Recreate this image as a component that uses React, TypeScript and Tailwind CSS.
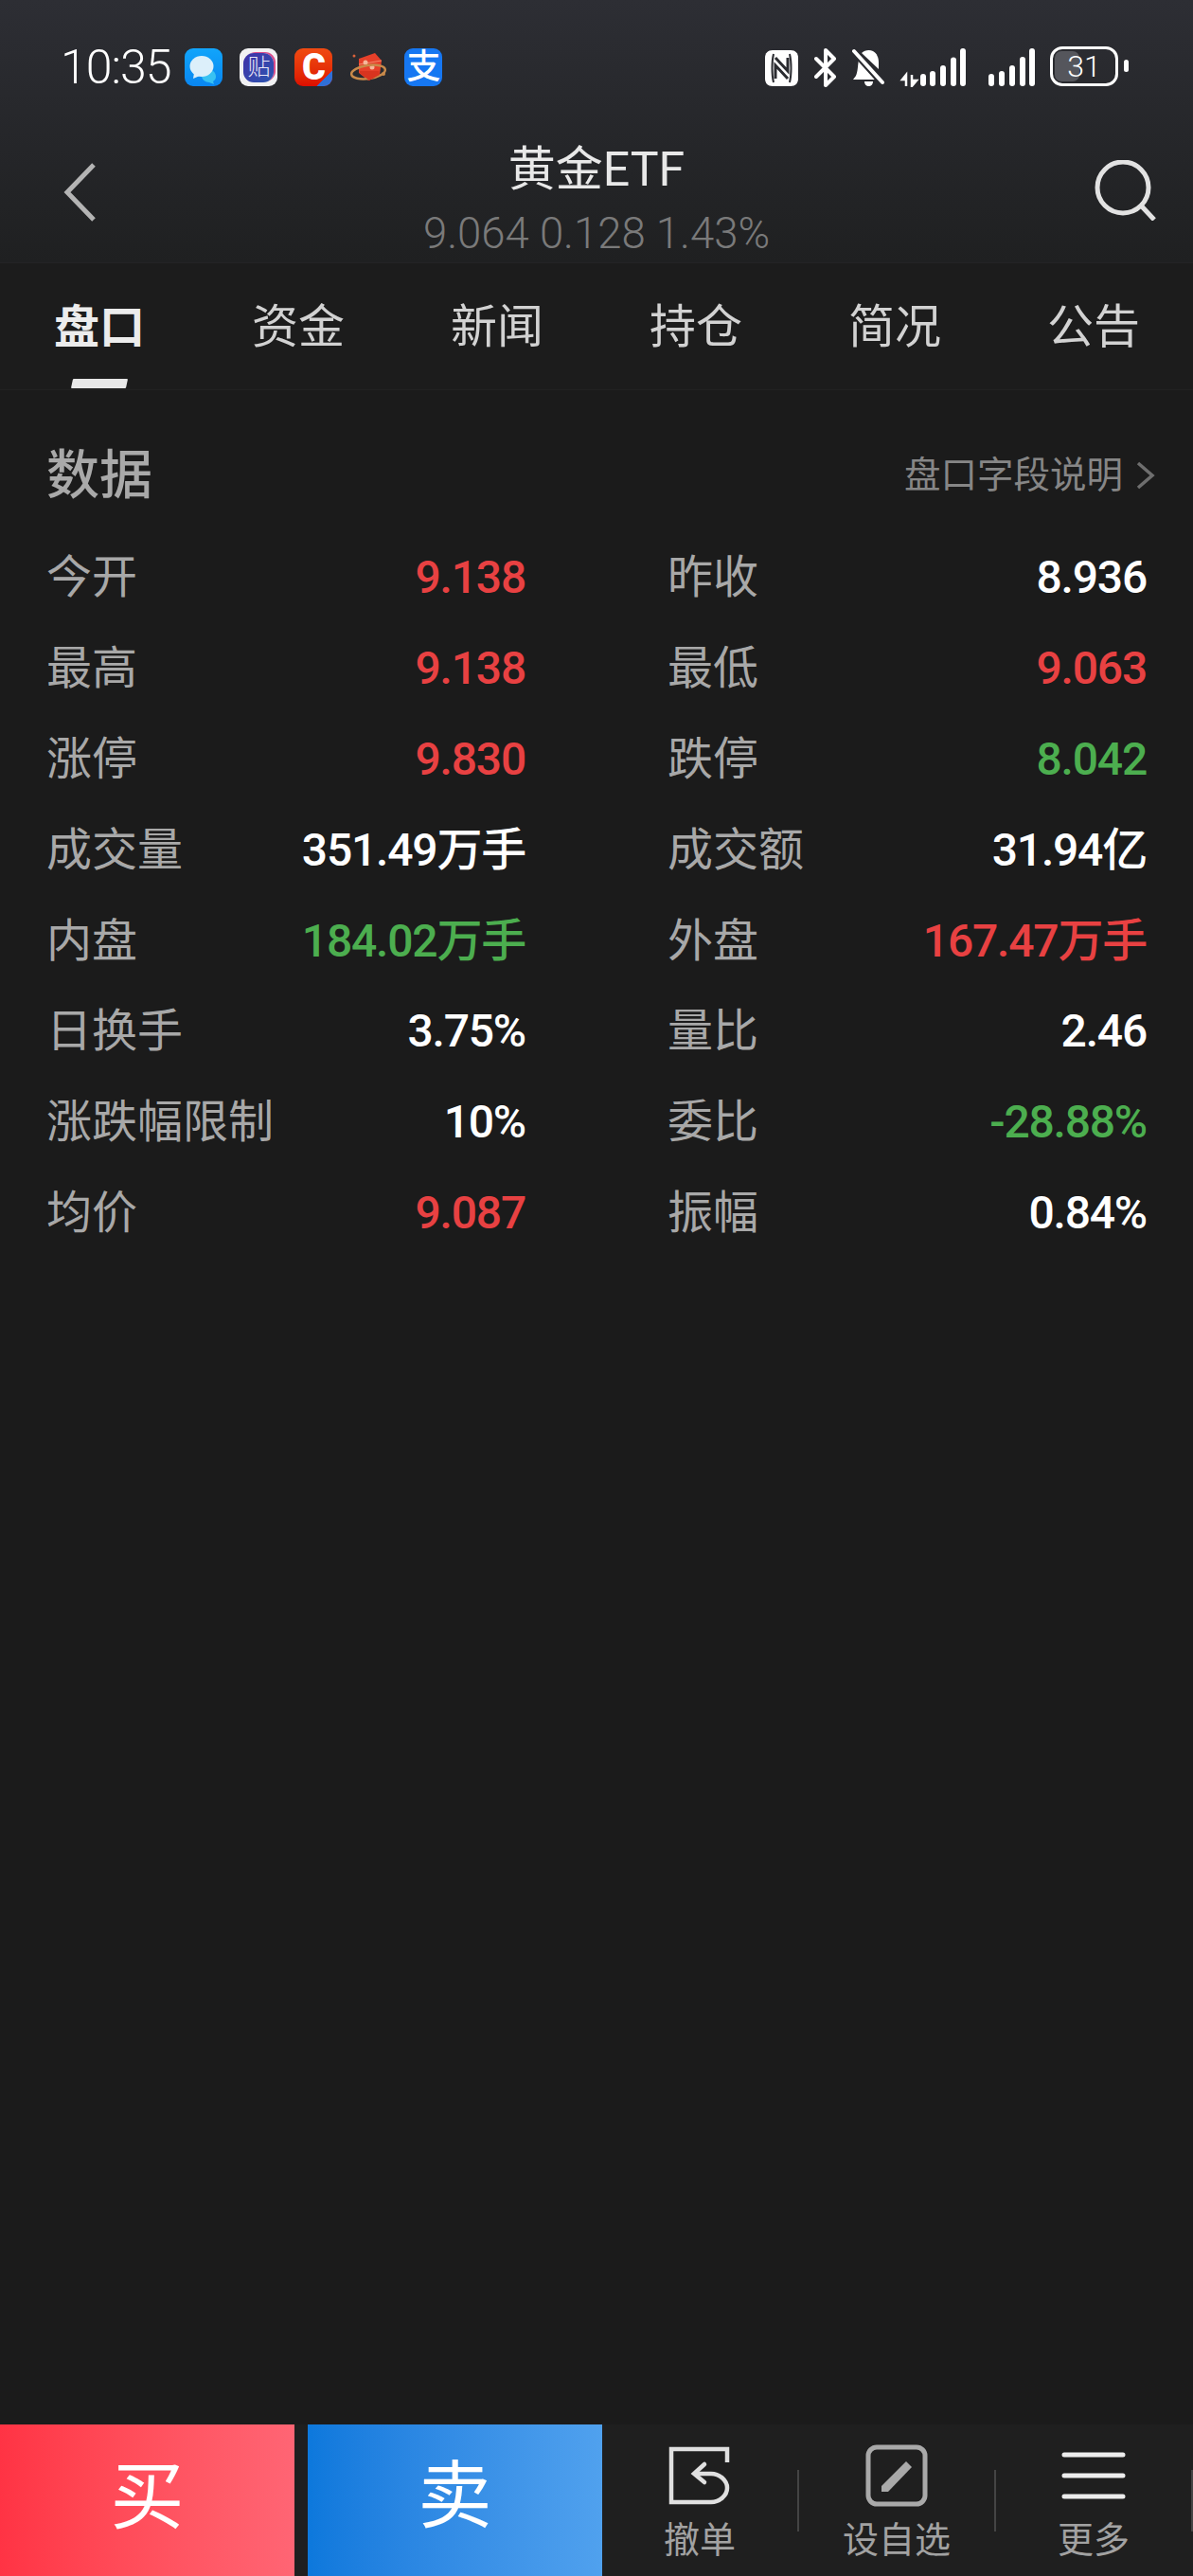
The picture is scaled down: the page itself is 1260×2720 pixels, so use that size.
const tabs = ["盘口", "资金", "新闻", "持仓", "简况", "公告"];

const RED = "text-[#e84142]";
const GREEN = "text-[#4cae4f]";
const WHITE = "text-white";

const rows = [
  ["今开", "9.138", RED, "昨收", "8.936", WHITE],
  ["最高", "9.138", RED, "最低", "9.063", RED],
  ["涨停", "9.830", RED, "跌停", "8.042", GREEN],
  ["成交量", "351.49万手", WHITE, "成交额", "31.94亿", WHITE],
  ["内盘", "184.02万手", GREEN, "外盘", "167.47万手", RED],
  ["日换手", "3.75%", WHITE, "量比", "2.46", WHITE],
  ["涨跌幅限制", "10%", WHITE, "委比", "-28.88%", GREEN],
  ["均价", "9.087", RED, "振幅", "0.84%", WHITE],
];

function AppIcons() {
  return (
    <div className="ml-[15px] flex gap-[18px]">
      <div className="flex h-[40px] w-[40px] items-center justify-center rounded-[9px] bg-gradient-to-b from-[#12a5fb] to-[#0a86f0]">
        <svg width="40" height="40" viewBox="0 0 40 40">
          <path d="M24 22c5 0 9 3 9 8 0 3-2 4-3 5l1 3-5-2c-4 0-8-3-8-7s3-7 6-7z" fill="#38c2f2" />
          <ellipse cx="18" cy="19" rx="12.5" ry="11" fill="#dceffa" />
          <path d="M10 26l-1 6 7-3z" fill="#dceffa" />
        </svg>
      </div>
      <div className="flex h-[40px] w-[40px] items-center justify-center rounded-[9px] bg-[#f1f1f3]">
        <div className="flex h-[31px] w-[32px] items-center justify-center rounded-[11px] bg-gradient-to-br from-[#3f2fa8] to-[#2a55b0] text-[24px] font-light leading-none text-[#e8e6f6] shadow-[2px_-1px_0_#d84a8a]">
          贴
        </div>
      </div>
      <div className="relative flex h-[40px] w-[40px] items-center justify-center rounded-[9px] bg-gradient-to-b from-[#f04a12] to-[#dc0c00] text-[38px] font-black leading-none text-white">
        C
        <div className="absolute bottom-0 right-0 h-[16px] w-[16px] rounded-br-[9px] bg-[linear-gradient(135deg,transparent_50%,#2f6fd6_50%)]" />
      </div>
      <svg width="40" height="40" viewBox="0 0 40 40">
        <path d="M10 11L27 5l7 8-2 15-12 6-10-8z" fill="#e6402a" />
        <path d="M10 17l24-4" stroke="#f38a6a" strokeWidth="1" />
        <circle cx="17" cy="15" r="2.500" fill="#f6b79a" />
        <circle cx="24" cy="20" r="2.500" fill="#f6b79a" />
        <ellipse cx="20" cy="25" rx="18" ry="7" fill="none" stroke="#c98a4a" strokeWidth="2.500" transform="rotate(-8 20 25)" />
        <path d="M11 26l10 8 11-6-1-4-20 0z" fill="#d8341f" />
        <circle cx="5" cy="8" r="1.500" fill="#d9623a" />
        <circle cx="36" cy="27" r="2" fill="#c98a4a" />
      </svg>
      <div className="flex h-[40px] w-[40px] items-center justify-center rounded-[9px] bg-[#1677f2] text-[36px] font-medium leading-none text-white">
        支
      </div>
    </div>
  );
}

function Bars({ width, tops, xs }: { width: number; tops: number[]; xs: number[] }) {
  return (
    <svg width={width} height="41" viewBox={`0 0 ${width} 41`}>
      {xs.map((x, i) => (
        <rect key={x} x={x} y={tops[i]} width="6" height={40 - tops[i]} rx="3" fill="white" />
      ))}
    </svg>
  );
}

function StatusIcons() {
  return (
    <div className="ml-auto flex items-start pr-[68px]">
      <svg width="35" height="38" viewBox="0 0 35 38" className="mt-[2px]">
        <path d="M8 0h19c5 0 8 3 8 8v22c0 5-3 8-8 8H8c-5 0-8-3-8-8V8c0-5 3-8 8-8z" fill="white" />
        <path d="M9 4c-2 8-2 22 0 30M26 4c2 8 2 22 0 30" stroke="#2a2b30" strokeWidth="2" fill="none" />
        <path d="M11 8l13 14V8M24 30L11 16v14" stroke="#2a2b30" strokeWidth="3" fill="none" />
      </svg>
      <svg width="24" height="41" viewBox="0 0 24 41" className="ml-[17px]">
        <path d="M2 11l19 19-9 9V2l9 9L2 30" stroke="white" strokeWidth="4" fill="none" strokeLinejoin="round" strokeLinecap="round" />
      </svg>
      <svg width="34" height="41" viewBox="0 0 34 41" className="ml-[16px]">
        <path d="M7 12c-1 5-1 13-3 17l-3 4h23z" fill="white" />
        <path d="M10 5c3-3 8-4 12-2 4 2 6 7 6 12v7z" fill="white" />
        <path d="M13 35h9c0 3-2 5-4.500 5S13 38 13 35z" fill="white" />
        <path d="M2 3l30 33" stroke="#2a2b30" strokeWidth="8" />
        <path d="M2 3l30 33" stroke="white" strokeWidth="4" strokeLinecap="round" />
      </svg>
      <svg width="70" height="41" viewBox="0 0 70 41" className="ml-[16px]">
        <path d="M7 40V28M7 28l-4 5h4zM13 28v12M13 40l5-6h-5z" stroke="white" strokeWidth="2.500" fill="white" />
        <rect x="22" y="27" width="6" height="13" rx="3" fill="white" />
        <rect x="32" y="24" width="6" height="16" rx="3" fill="white" />
        <rect x="43" y="18" width="6" height="22" rx="3" fill="white" />
        <rect x="54" y="9.500" width="6" height="30.500" rx="3" fill="white" />
        <rect x="64" y="0" width="6" height="40" rx="3" fill="white" />
      </svg>
      <div className="ml-[24px]">
        <Bars width={49} xs={[0, 11, 22, 33, 43]} tops={[27, 24, 18, 9, 0]} />
      </div>
      <div className="relative ml-[16px] flex h-[42px] w-[72px] -translate-y-[2px] items-center justify-center rounded-[13px] border-[3px] border-white text-[32px] font-light leading-none text-white">
        <div className="absolute inset-y-[2px] left-[2px] w-[26px] rounded-[7px] bg-[#55565c]" />
        <span className="relative">31</span>
      </div>
      <div className="ml-[6px] mt-[12px] h-[13px] w-[5px] rounded-full bg-white" />
    </div>
  );
}

function BottomAction({ label, children }: { label: string; children: React.ReactNode }) {
  return (
    <div className="flex h-full w-[206px] shrink-0 flex-col items-center pt-[21px]">
      <div className="flex h-[66px] items-center justify-center">{children}</div>
      <span className="mt-[15px] text-[38px] leading-[40px] text-[#a2a2a2]">{label}</span>
    </div>
  );
}

function Divider() {
  return <div className="h-[65px] w-[2px] shrink-0 bg-[#444444]" />;
}

export default function App() {
  return (
    <div className="flex h-[2720px] w-[1260px] flex-col overflow-hidden bg-[#1b1b1b] font-[Roboto,'Noto_Sans_CJK_SC',sans-serif]">
      <header className="h-[278px] shrink-0 border-b border-[#242425] bg-gradient-to-b from-[#2d2e34] to-[#1f2021]">
        <div className="flex h-[144px] items-start pt-[51px]">
          <span className="pl-[64px] text-[50px] font-light leading-[41px] tracking-[-1px] text-white">10:35</span>
          <AppIcons />
          <StatusIcons />
        </div>
        <div className="flex h-[133px] items-start">
          <div className="w-[150px] pl-[67px] pt-[28px]">
            <svg width="34" height="62" viewBox="0 0 34 62">
              <path d="M32 2L4 31l28 29" stroke="#b4b4b4" strokeWidth="5" fill="none" />
            </svg>
          </div>
          <div className="flex flex-1 flex-col items-center pt-[7px]">
            <span className="text-[50px] leading-[56px] text-[#e8e8e8]">黄金ETF</span>
            <span className="mt-[15px] text-[45.5px] font-light leading-[50px] text-[#7a7a7a]">9.064 0.128 1.43%</span>
          </div>
          <div className="flex w-[150px] justify-end pr-[38px] pt-[25px]">
            <svg width="66" height="64" viewBox="0 0 66 64">
              <circle cx="30" cy="29" r="27" stroke="#e2e2e2" strokeWidth="5" fill="none" />
              <path d="M50 49l13 14" stroke="#e2e2e2" strokeWidth="5" />
            </svg>
          </div>
        </div>
      </header>

      <nav className="grid h-[134px] shrink-0 grid-cols-6 border-b border-[#222222] bg-[#1c1c1c]">
        {tabs.map((tab, i) => (
          <div key={tab} className="relative flex justify-center pt-[43px]">
            <span className={i === 0 ? "text-[48px] font-bold leading-[50px] text-[#ececec]" : "text-[49px] leading-[50px] text-[#d2d2d2]"}>
              {tab}
            </span>
            {i === 0 && (
              <div className="absolute left-[76px] top-[122px] h-[10px] w-[58px] -skew-x-12 rounded-[1px] bg-[#e8e8e8]" />
            )}
          </div>
        ))}
      </nav>

      <main className="flex-1 pl-[49px] pr-[49px]">
        <div className="flex items-center justify-between pt-[58px]">
          <h2 className="text-[56px] font-medium leading-[64px] text-[#a9a9a9]">数据</h2>
          <div className="mr-[-9px] flex items-center text-[38.5px] leading-[44px] text-[#868686]">
            盘口字段说明
            <svg width="20" height="30" viewBox="0 0 20 30" className="ml-[14px]">
              <path d="M2 2l15 13L2 28" stroke="#6e6e6e" strokeWidth="3.500" fill="none" />
            </svg>
          </div>
        </div>
        <div className="mt-[28px] flex flex-col">
          {rows.map(([leftLabel, leftValue, leftColor, rightLabel, rightValue, rightColor]) => (
            <div key={leftLabel} className="grid h-[95.9px] grid-cols-[506px_506px] items-center gap-x-[150px]">
              <div className="flex items-center justify-between">
                <span className="text-[48px] leading-[56px] text-[#a8a8a8]">{leftLabel}</span>
                <span className={`text-[48px] font-medium leading-[56px] tracking-[-1.2px] ${leftColor}`}>{leftValue}</span>
              </div>
              <div className="flex items-center justify-between">
                <span className="text-[48px] leading-[56px] text-[#a8a8a8]">{rightLabel}</span>
                <span className={`text-[48px] font-medium leading-[56px] tracking-[-1.2px] ${rightColor}`}>{rightValue}</span>
              </div>
            </div>
          ))}
        </div>
      </main>

      <footer className="flex h-[160px] shrink-0 items-stretch overflow-hidden bg-[#1f1f1f]">
        <div className="flex w-[311px] shrink-0 items-center justify-center bg-gradient-to-r from-[#ff3344] to-[#ff6574] pb-[4px] text-[78px] leading-none text-white">
          买
        </div>
        <div className="ml-[14px] flex w-[311px] shrink-0 items-center justify-center bg-gradient-to-r from-[#0c78dc] to-[#50a1ee] pb-[6px] text-[78px] leading-none text-white">
          卖
        </div>
        <div className="flex items-center">
          <BottomAction label="撤单">
            <svg width="66" height="62" viewBox="0 0 66 62" fill="none" stroke="#e0e0e0" strokeWidth="4.500">
              <path d="M62 17V3H3v56h42c9 0 17-7 17-15s-8-15-17-15H27" />
              <path d="M38 19L27 29l11 9" strokeLinecap="round" />
            </svg>
          </BottomAction>
          <Divider />
          <BottomAction label="设自选">
            <svg width="66" height="66" viewBox="0 0 66 66">
              <rect x="3" y="3" width="60" height="60" rx="9" stroke="#a9a9a9" strokeWidth="5" fill="none" />
              <path d="M43 18l6 6-25 26h-7v-6z" fill="#a9a9a9" />
            </svg>
          </BottomAction>
          <Divider />
          <BottomAction label="更多">
            <svg width="68" height="54" viewBox="0 0 68 54" stroke="#ededed" strokeWidth="5" strokeLinecap="round">
              <path d="M3 5h62M3 27h62M3 49h62" />
            </svg>
          </BottomAction>
          <Divider />
        </div>
      </footer>
    </div>
  );
}
